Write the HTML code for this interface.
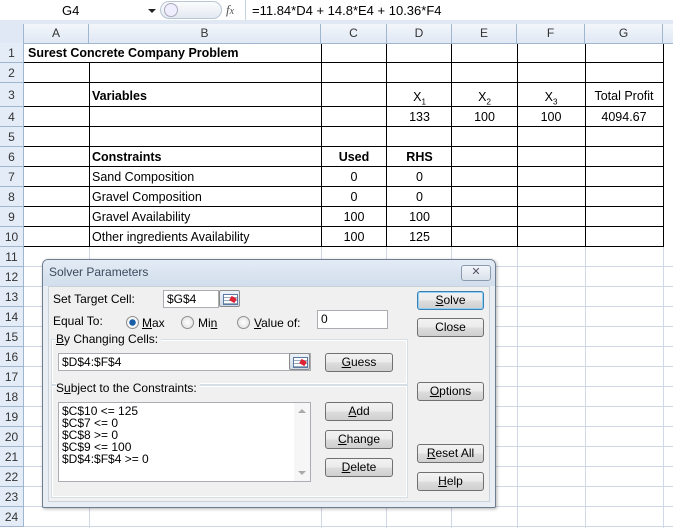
<!DOCTYPE html>
<html><head><style>
*{margin:0;padding:0;box-sizing:border-box}
body{width:673px;height:528px;overflow:hidden;background:#fff;position:relative;font-family:"Liberation Sans",sans-serif}
.a{position:absolute}
.h{position:absolute;height:1px}
.v{position:absolute;width:1px}
.rh{position:absolute;left:0;width:24px;height:20px;background:#e4ecf7;border-bottom:1px solid #9eb6ce;border-right:1px solid #9eb6ce;font-size:12px;color:#333;text-align:center;line-height:20px}
.ch{position:absolute;top:24px;height:20px;background:linear-gradient(#f3f6fb,#dfe8f4);border-right:1px solid #9eb6ce;border-bottom:1px solid #9eb6ce;font-size:12px;color:#333;text-align:center;line-height:19px}
.t{position:absolute;font-size:12.5px;color:#000;white-space:nowrap;line-height:20px}
.c{text-align:center}
.b{font-weight:bold}
.d{font-size:12px;color:#000;position:absolute;white-space:nowrap}
.btn{position:absolute;width:67px;height:19px;border:1px solid #707070;border-radius:3px;background:linear-gradient(#f2f2f2 0%,#ebebeb 50%,#dddddd 51%,#cfcfcf 100%);font-size:12px;text-align:center;line-height:17px;color:#000}
.inp{position:absolute;background:#fff;border:1px solid #abadb3;font-size:12px;line-height:16px;padding-left:3px}
.ref{position:absolute;width:21px;height:17px;border:1px solid #8a8a8a;border-radius:2px;background:linear-gradient(#eef3fa,#cfd9e6)}
.ref:before{content:"";position:absolute;left:3px;top:3px;width:13px;height:9px;border:1px solid #5b7aa3;background:repeating-linear-gradient(#fff 0 2px,#9ab 2px 3px)}
.ref:after{content:"";position:absolute;left:10px;top:6px;width:6px;height:5px;background:#d23;transform:rotate(30deg)}
.rad{position:absolute;width:13px;height:13px;border-radius:50%;border:1px solid #8e8f8f;background:radial-gradient(#fff,#dcdcdc)}
u{text-decoration:underline}
</style></head><body>
<!-- formula bar -->
<div class="a" style="left:0;top:0;width:673px;height:22px;background:#fff;border-bottom:1px solid #b8c9dc"></div>
<div class="a" style="left:0;top:20px;width:673px;height:4px;background:#dfe8f3"></div>
<div class="d" style="left:62px;top:3px;font-size:13px">G4</div>
<div class="a" style="left:148px;top:9px;width:0;height:0;border-left:4px solid transparent;border-right:4px solid transparent;border-top:4px solid #222"></div>
<div class="a" style="left:160px;top:1px;width:62px;height:18px;border:1px solid #b9c6d6;border-radius:9px;background:linear-gradient(#fbfcfd,#e3e9f1)"></div>
<div class="a" style="left:164px;top:3px;width:14px;height:14px;border-radius:50%;border:1px solid #aab;background:#eef"></div>
<div class="d" style="left:226px;top:2px;font-style:italic;font-family:'Liberation Serif',serif;font-size:13px;color:#555">f<span style="font-size:10px">x</span></div>
<div class="v" style="left:245px;top:0;height:20px;background:#c5d2e0"></div>
<div class="d" style="left:252px;top:3px;font-size:13px">=11.84*D4 + 14.8*E4 + 10.36*F4</div>
<!-- headers -->
<div class="a" style="left:0;top:24px;width:24px;height:20px;background:#dfe8f4;border-right:1px solid #9eb6ce;border-bottom:1px solid #9eb6ce"></div>
<div class="ch" style="left:24px;width:65px">A</div>
<div class="ch" style="left:89px;width:232px">B</div>
<div class="ch" style="left:321px;width:66px">C</div>
<div class="ch" style="left:387px;width:65px">D</div>
<div class="ch" style="left:452px;width:65px">E</div>
<div class="ch" style="left:517px;width:68px">F</div>
<div class="ch" style="left:585px;width:78px">G</div>
<div class="ch" style="left:663px;width:20px"></div>
<div class="rh" style="top:43px">1</div>
<div class="rh" style="top:63px">2</div>
<div class="rh" style="top:83px;height:24px;line-height:24px">3</div>
<div class="rh" style="top:107px">4</div>
<div class="rh" style="top:127px">5</div>
<div class="rh" style="top:147px">6</div>
<div class="rh" style="top:167px">7</div>
<div class="rh" style="top:187px">8</div>
<div class="rh" style="top:207px">9</div>
<div class="rh" style="top:227px">10</div>
<div class="rh" style="top:247px">11</div>
<div class="rh" style="top:267px">12</div>
<div class="rh" style="top:287px">13</div>
<div class="rh" style="top:307px">14</div>
<div class="rh" style="top:327px">15</div>
<div class="rh" style="top:347px">16</div>
<div class="rh" style="top:367px">17</div>
<div class="rh" style="top:387px">18</div>
<div class="rh" style="top:407px">19</div>
<div class="rh" style="top:427px">20</div>
<div class="rh" style="top:447px">21</div>
<div class="rh" style="top:467px">22</div>
<div class="rh" style="top:487px">23</div>
<div class="rh" style="top:507px">24</div>
<!-- light grid -->
<div class="h" style="left:24px;width:649px;top:266px;background:#d0d7e5"></div>
<div class="h" style="left:24px;width:649px;top:286px;background:#d0d7e5"></div>
<div class="h" style="left:24px;width:649px;top:306px;background:#d0d7e5"></div>
<div class="h" style="left:24px;width:649px;top:326px;background:#d0d7e5"></div>
<div class="h" style="left:24px;width:649px;top:346px;background:#d0d7e5"></div>
<div class="h" style="left:24px;width:649px;top:366px;background:#d0d7e5"></div>
<div class="h" style="left:24px;width:649px;top:386px;background:#d0d7e5"></div>
<div class="h" style="left:24px;width:649px;top:406px;background:#d0d7e5"></div>
<div class="h" style="left:24px;width:649px;top:426px;background:#d0d7e5"></div>
<div class="h" style="left:24px;width:649px;top:446px;background:#d0d7e5"></div>
<div class="h" style="left:24px;width:649px;top:466px;background:#d0d7e5"></div>
<div class="h" style="left:24px;width:649px;top:486px;background:#d0d7e5"></div>
<div class="h" style="left:24px;width:649px;top:506px;background:#d0d7e5"></div>
<div class="h" style="left:24px;width:649px;top:526px;background:#d0d7e5"></div>
<div class="v" style="left:89px;top:247px;height:281px;background:#d0d7e5"></div>
<div class="v" style="left:321px;top:247px;height:281px;background:#d0d7e5"></div>
<div class="v" style="left:386px;top:247px;height:281px;background:#d0d7e5"></div>
<div class="v" style="left:451px;top:247px;height:281px;background:#d0d7e5"></div>
<div class="v" style="left:517px;top:247px;height:281px;background:#d0d7e5"></div>
<div class="v" style="left:585px;top:247px;height:281px;background:#d0d7e5"></div>
<div class="v" style="left:663px;top:44px;height:484px;background:#d0d7e5"></div>
<!-- black grid -->
<div class="h" style="left:24px;width:640px;top:62px;background:#000"></div>
<div class="h" style="left:24px;width:640px;top:82px;background:#000"></div>
<div class="h" style="left:24px;width:640px;top:106px;background:#000"></div>
<div class="h" style="left:24px;width:640px;top:126px;background:#000"></div>
<div class="h" style="left:24px;width:640px;top:146px;background:#000"></div>
<div class="h" style="left:24px;width:640px;top:166px;background:#000"></div>
<div class="h" style="left:24px;width:640px;top:186px;background:#000"></div>
<div class="h" style="left:24px;width:640px;top:206px;background:#000"></div>
<div class="h" style="left:24px;width:640px;top:226px;background:#000"></div>
<div class="h" style="left:24px;width:640px;top:246px;background:#000"></div>
<div class="v" style="left:89px;top:63px;height:184px;background:#000"></div>
<div class="v" style="left:321px;top:44px;height:203px;background:#000"></div>
<div class="v" style="left:386px;top:44px;height:203px;background:#000"></div>
<div class="v" style="left:451px;top:44px;height:203px;background:#000"></div>
<div class="v" style="left:517px;top:44px;height:203px;background:#000"></div>
<div class="v" style="left:585px;top:44px;height:203px;background:#000"></div>
<div class="v" style="left:663px;top:44px;height:203px;background:#000"></div>
<!-- cell text -->
<div class="t b" style="left:28px;top:43px">Surest Concrete Company Problem</div>
<div class="t b" style="left:92px;top:86px">Variables</div>
<div class="t c" style="left:387px;width:65px;top:87px">X<sub style="font-size:8px">1</sub></div>
<div class="t c" style="left:452px;width:65px;top:87px">X<sub style="font-size:8px">2</sub></div>
<div class="t c" style="left:517px;width:68px;top:87px">X<sub style="font-size:8px">3</sub></div>
<div class="t c" style="left:585px;width:78px;top:86px">Total Profit</div>
<div class="t c" style="left:387px;width:65px;top:107px">133</div>
<div class="t c" style="left:452px;width:65px;top:107px">100</div>
<div class="t c" style="left:517px;width:68px;top:107px">100</div>
<div class="t c" style="left:585px;width:78px;top:107px">4094.67</div>
<div class="t b" style="left:92px;top:147px">Constraints</div>
<div class="t b c" style="left:321px;width:66px;top:147px">Used</div>
<div class="t b c" style="left:387px;width:65px;top:147px">RHS</div>
<div class="t" style="left:92px;top:167px">Sand Composition</div>
<div class="t" style="left:92px;top:187px">Gravel Composition</div>
<div class="t" style="left:92px;top:207px">Gravel Availability</div>
<div class="t" style="left:92px;top:227px">Other ingredients Availability</div>
<div class="t c" style="left:321px;width:66px;top:167px">0</div>
<div class="t c" style="left:321px;width:66px;top:187px">0</div>
<div class="t c" style="left:321px;width:66px;top:207px">100</div>
<div class="t c" style="left:321px;width:66px;top:227px">100</div>
<div class="t c" style="left:387px;width:65px;top:167px">0</div>
<div class="t c" style="left:387px;width:65px;top:187px">0</div>
<div class="t c" style="left:387px;width:65px;top:207px">100</div>
<div class="t c" style="left:387px;width:65px;top:227px">125</div>
<!-- dialog -->
<div class="a" style="left:42px;top:259px;width:454px;height:249px;border:1px solid #6e7d8f;border-radius:6px 6px 2px 2px;background:#e9eef4;box-shadow:1px 1px 3px rgba(0,0,0,.3)"></div>
<div class="a" style="left:43px;top:260px;width:452px;height:26px;border-radius:5px 5px 0 0;background:linear-gradient(#e3ebf5,#d2deec)"></div>
<div class="d" style="left:49px;top:265px;color:#3c4a5c">Solver Parameters</div>
<div class="a" style="left:461px;top:265px;width:30px;height:16px;border:1px solid #8c9aad;border-radius:3px;background:linear-gradient(#f3f6fa,#d9e1ea);font-size:11px;text-align:center;line-height:13px;color:#556">&#x2715;</div>
<div class="a" style="left:48px;top:286px;width:442px;height:216px;background:#f0f0f0;border:1px solid #c9d1db"></div>
<div class="d" style="left:53px;top:292px">Set Target Cell:</div>
<div class="inp" style="left:163px;top:290px;width:56px;height:18px">$G$4</div>
<div class="ref" style="left:219px;top:290px"></div>
<div class="d" style="left:53px;top:314px">Equal To:</div>
<div class="rad" style="left:126px;top:316px;background:radial-gradient(#1a5ea8 0 3px,#fff 3.5px,#ddd)"></div>
<div class="d" style="left:142px;top:316px"><u>M</u>ax</div>
<div class="rad" style="left:181px;top:316px"></div>
<div class="d" style="left:198px;top:316px">Mi<u>n</u></div>
<div class="rad" style="left:237px;top:316px"></div>
<div class="d" style="left:254px;top:316px"><u>V</u>alue of:</div>
<div class="inp" style="left:317px;top:310px;width:71px;height:19px">0</div>
<div class="a" style="left:52px;top:340px;width:355px;height:44px;border:1px solid #fff;outline:1px solid #d5dfe5;background:#f0f0f0"></div>
<div class="a" style="left:52px;top:386px;width:355px;height:111px;border:1px solid #fff;outline:1px solid #d5dfe5;background:#f0f0f0"></div>
<div class="d" style="left:56px;top:332px;background:#f0f0f0;padding-right:3px"><u>B</u>y Changing Cells:</div>
<div class="inp" style="left:58px;top:353px;width:253px;height:18px">$D$4:$F$4</div>
<div class="ref" style="left:289px;top:353px"></div>
<div class="d" style="left:56px;top:381px;background:#f0f0f0;padding-right:3px">S<u>u</u>bject to the Constraints:</div>
<div class="inp" style="left:58px;top:402px;width:253px;height:80px;line-height:12px;padding-top:2px;font-size:12px">$C$10 &lt;= 125<br>$C$7 &lt;= 0<br>$C$8 &gt;= 0<br>$C$9 &lt;= 100<br>$D$4:$F$4 &gt;= 0</div>
<div class="a" style="left:294px;top:403px;width:16px;height:78px;background:#f6f6f6"></div>
<div class="a" style="left:298px;top:409px;border-left:4px solid transparent;border-right:4px solid transparent;border-bottom:4px solid #aaa"></div>
<div class="a" style="left:298px;top:471px;border-left:4px solid transparent;border-right:4px solid transparent;border-top:4px solid #aaa"></div>
<div class="btn" style="left:417px;top:291px;border-color:#3c7fb1;box-shadow:inset 0 0 0 1px #8ed1f5"><u>S</u>olve</div>
<div class="btn" style="left:417px;top:318px">Close</div>
<div class="btn" style="left:325px;top:353px;width:68px"><u>G</u>uess</div>
<div class="btn" style="left:417px;top:382px"><u>O</u>ptions</div>
<div class="btn" style="left:325px;top:402px;width:68px"><u>A</u>dd</div>
<div class="btn" style="left:325px;top:430px;width:68px"><u>C</u>hange</div>
<div class="btn" style="left:325px;top:458px;width:68px"><u>D</u>elete</div>
<div class="btn" style="left:417px;top:444px"><u>R</u>eset All</div>
<div class="btn" style="left:417px;top:472px"><u>H</u>elp</div>
</body></html>
